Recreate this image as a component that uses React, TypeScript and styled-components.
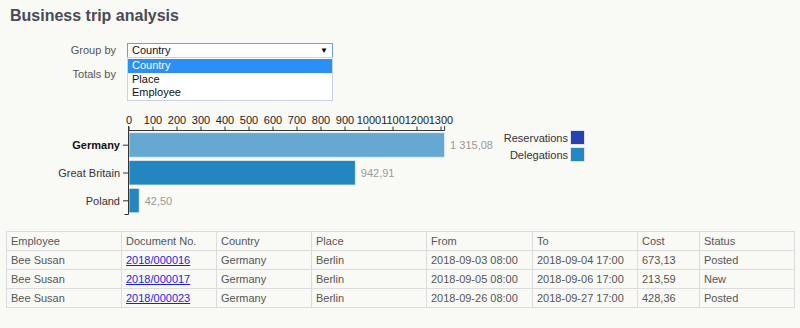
import React from 'react';
import styled, { createGlobalStyle } from 'styled-components';

const GlobalStyle = createGlobalStyle`
  body {
    margin: 0;
    background-color: #f9f9f6;
    font-family: 'Liberation Sans', Arial, sans-serif;
  }
`;

const Page = styled.main`
  width: 800px;
  height: 328px;
  overflow: hidden;
`;

const Title = styled.h1`
  margin: 0;
  padding: 7px 0 0 10px;
  font-size: 16px;
  line-height: 18px;
  font-weight: bold;
  color: #4a4a57;
`;

const Form = styled.div`
  margin-top: 18px;
  padding-left: 6px;
  display: grid;
  grid-template-columns: 110px 206px;
  column-gap: 11px;
  row-gap: 9px;
`;

const Label = styled.label`
  text-align: right;
  font-size: 11px;
  line-height: 15px;
  color: #555;
`;

const SelectBox = styled.div<{ $focused?: boolean }>`
  position: relative;
  box-sizing: border-box;
  height: 15px;
  padding: 0 4px;
  display: flex;
  align-items: center;
  justify-content: space-between;
  background: #fff;
  border: 1px solid ${(p) => (p.$focused ? '#6f9fd8' : '#c8c8c8')};
  font-size: 11px;
  line-height: 13px;
  color: #111;
`;

const Arrow = styled.span`
  font-size: 8px;
  color: #000;
`;

const DropList = styled.ul`
  position: absolute;
  top: 100%;
  left: -1px;
  right: -1px;
  margin: 0;
  padding: 0 0 1px;
  list-style: none;
  background: #fff;
  border: 1px solid #c9d2de;
  z-index: 2;
`;

const Option = styled.li<{ $active?: boolean }>`
  padding: 0 4px;
  height: 13px;
  line-height: 13px;
  font-size: 11px;
  color: ${(p) => (p.$active ? '#fff' : '#111')};
  background: ${(p) => (p.$active ? '#2b8ff5' : 'transparent')};
  &:first-child {
    height: 14px;
    margin-top: 1px;
  }
`;

const Chart = styled.svg`
  display: block;
  margin-top: 23px;
  font-family: 'Liberation Sans', Arial, sans-serif;
  font-size: 11px;
`;

const Table = styled.table`
  margin: 11px 6px 0;
  width: 788px;
  table-layout: fixed;
  border-collapse: collapse;
  font-size: 11px;
  color: #555;
`;

const Cell = styled.td`
  box-sizing: border-box;
  height: 19px;
  padding: 0 4px;
  border: 1px solid #dcdcdc;
  white-space: nowrap;
  overflow: hidden;
`;

const HeadCell = styled(Cell).attrs({ as: 'th' })`
  font-weight: normal;
  text-align: left;
`;

const DocLink = styled.a`
  color: #1d1ddf;
  text-decoration: underline;
`;

const X0 = 129;
const K = 0.24;

const rows = [
  { name: 'Germany', value: 1315.08, label: '1 315,08', y: 132.7, color: '#65a9d3', bold: true },
  { name: 'Great Britain', value: 942.91, label: '942,91', y: 160.5, color: '#2386bf', bold: false },
  { name: 'Poland', value: 42.5, label: '42,50', y: 188.3, color: '#2386bf', bold: false },
];

const ticks = [0, 100, 200, 300, 400, 500, 600, 700, 800, 900, 1000, 1100, 1200, 1300];

const trips = [
  { doc: '2018/000016', from: '2018-09-03 08:00', to: '2018-09-04 17:00', cost: '673,13', status: 'Posted' },
  { doc: '2018/000017', from: '2018-09-05 08:00', to: '2018-09-06 17:00', cost: '213,59', status: 'New' },
  { doc: '2018/000023', from: '2018-09-26 08:00', to: '2018-09-27 17:00', cost: '428,36', status: 'Posted' },
];

const widths = [115, 95, 95, 115, 106, 105, 62, 95];
const headers = ['Employee', 'Document No.', 'Country', 'Place', 'From', 'To', 'Cost', 'Status'];

const BarChart: React.FC = () => {
  const end = X0 + 1315.08 * K;
  return (
    <Chart width={600} height={115} viewBox="0 105 600 115">
      {ticks.map((t) => (
        <g key={t}>
          <line x1={X0 + t * K} x2={X0 + t * K} y1={126.5} y2={130.5} stroke="#333" />
          <text x={X0 + t * K} y={124} textAnchor="middle" fill="#222">
            {t}
          </text>
        </g>
      ))}
      <path d={`M${X0 - 0.5},126 V130.5 H${end} V126`} fill="none" stroke="#333" />
      {rows.map((r) => (
        <g key={r.name}>
          <rect
            x={X0}
            y={r.y}
            width={r.value * K}
            height={24.5}
            fill={r.color}
            stroke="#e4eef6"
            strokeWidth={0.8}
          />
          <line x1={123} x2={128.5} y1={r.y + 12.5} y2={r.y + 12.5} stroke="#333" />
          <text
            x={120}
            y={r.y + 16.5}
            textAnchor="end"
            fill={r.bold ? '#111' : '#333'}
            fontWeight={r.bold ? 'bold' : 'normal'}
          >
            {r.name}
          </text>
          <text x={X0 + r.value * K + 5.5} y={r.y + 16.5} fill="#999">
            {r.label}
          </text>
        </g>
      ))}
      <path d={`M${X0 - 0.5},130.5 V214.5 H124.5`} fill="none" stroke="#333" />
      <text x={568} y={142} textAnchor="end" fill="#333">Reservations</text>
      <rect x={570.5} y={130.5} width={14} height={14} fill="#2442b2" stroke="#dde4f0" />
      <text x={568} y={158.5} textAnchor="end" fill="#333">Delegations</text>
      <rect x={570.5} y={147.5} width={14} height={14} fill="#2389c4" stroke="#dde4f0" />
    </Chart>
  );
};

const App: React.FC = () => {
  return (
    <Page>
      <GlobalStyle />
      <Title>Business trip analysis</Title>
      <Form>
        <Label>Group by</Label>
        <SelectBox $focused>
          <span>Country</span>
          <Arrow>▼</Arrow>
          <DropList>
            <Option $active>Country</Option>
            <Option>Place</Option>
            <Option>Employee</Option>
          </DropList>
        </SelectBox>
        <Label>Totals by</Label>
        <SelectBox />
      </Form>
      <BarChart />
      <Table>
        <colgroup>
          {widths.map((w, i) => (
            <col key={i} style={{ width: w }} />
          ))}
        </colgroup>
        <thead>
          <tr>
            {headers.map((h) => (
              <HeadCell key={h}>{h}</HeadCell>
            ))}
          </tr>
        </thead>
        <tbody>
          {trips.map((t) => (
            <tr key={t.doc}>
              <Cell>Bee Susan</Cell>
              <Cell>
                <DocLink href="#">{t.doc}</DocLink>
              </Cell>
              <Cell>Germany</Cell>
              <Cell>Berlin</Cell>
              <Cell>{t.from}</Cell>
              <Cell>{t.to}</Cell>
              <Cell>{t.cost}</Cell>
              <Cell>{t.status}</Cell>
            </tr>
          ))}
        </tbody>
      </Table>
    </Page>
  );
};

export default App;
